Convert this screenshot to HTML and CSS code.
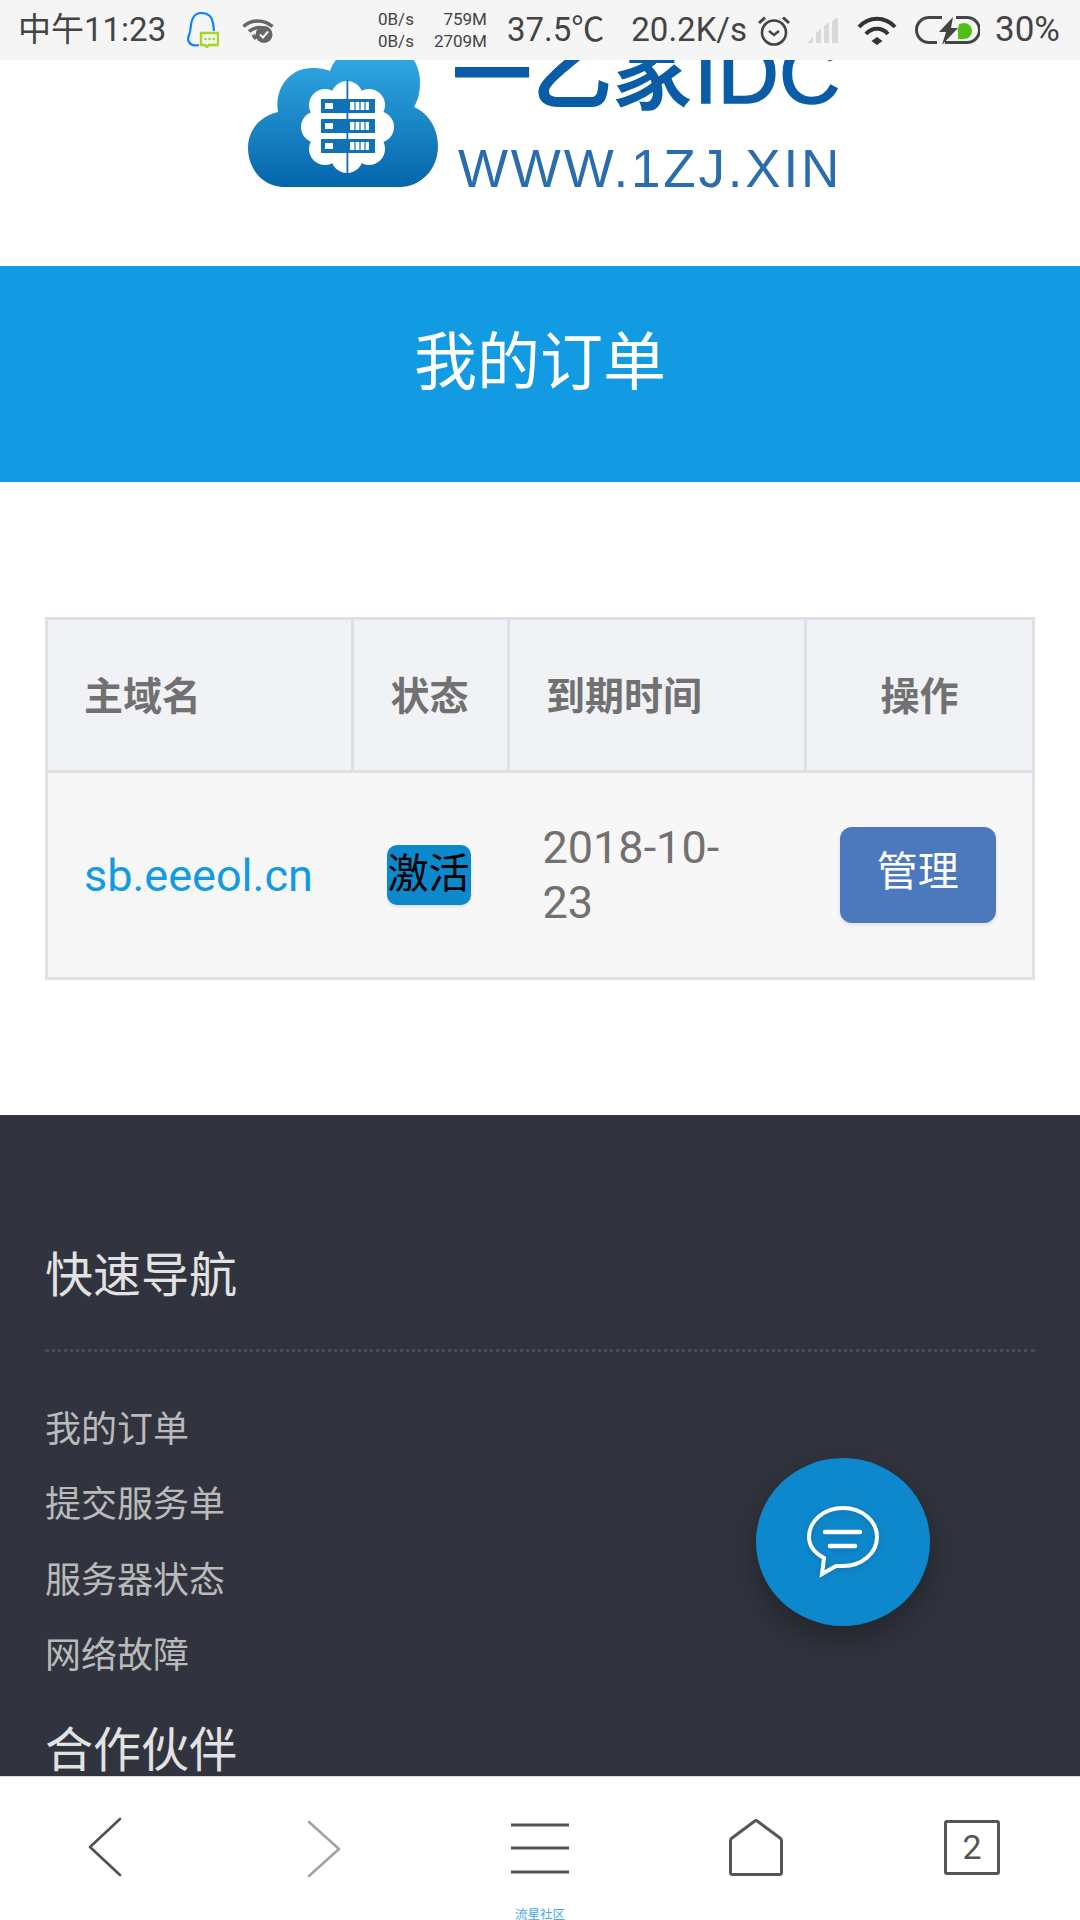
FILE: index.html
```html
<!DOCTYPE html>
<html lang="zh-CN">
<head>
<meta charset="utf-8">
<title>我的订单</title>
<link rel="stylesheet" href="styles.css">
</head>
<body>
<div class="phone">
  <header class="status">
    <div class="status-left">
      <span class="st-text">中午11:23</span>
      <svg class="ic-qq" viewBox="0 0 32 36"><path d="M12 33C7 34 3 33 1.500 29C0 26 2 24 3 20C3.500 16 4 13 4.500 10C6 4 9 1 14 1C20 1 25 4 26 11L27 19" fill="none" stroke="#0a84ff" stroke-width="2.200"/><path d="M14 21H31V33H22L20 35L18 33H14Z" fill="#f5f5f5" stroke="#a5d61c" stroke-width="2.400"/><circle cx="18.500" cy="27" r="1.300" fill="#a5d61c"/><circle cx="22.500" cy="27" r="1.300" fill="#a5d61c"/><circle cx="26.500" cy="27" r="1.300" fill="#a5d61c"/></svg>
      <svg class="ic-wc" viewBox="0 0 32 25"><path d="M1.500 8.500C10 1 22 1 30.500 8.500" fill="none" stroke="#666" stroke-width="3.500"/><path d="M7 13.500C11 10 16 9 21 10" fill="none" stroke="#666" stroke-width="3.500"/><path d="M11 17L14 21" stroke="#666" stroke-width="3.500"/><circle cx="22" cy="16.500" r="8.500" fill="#666"/><path d="M18 16.500L21 19.500L26 13.500" fill="none" stroke="#f5f5f5" stroke-width="2"/></svg>
    </div>
    <div class="status-right">
      <div class="net"><span>0B/s</span><span class="net-r">759M</span><span>0B/s</span><span class="net-r">2709M</span></div>
      <span class="st-text st-temp">37.5℃</span>
      <span class="st-text st-speed">20.2K/s</span>
      <svg class="ic-alarm" viewBox="0 0 32 32"><circle cx="16" cy="18.500" r="12" fill="none" stroke="#444" stroke-width="2.600"/><path d="M11 17L16 21L21 17" fill="none" stroke="#444" stroke-width="2.400"/><path d="M1 9L7 3.500M31 9L25 3.500" stroke="#444" stroke-width="3"/></svg>
      <svg class="ic-signal" viewBox="0 0 31 26"><path d="M0 26L6 20V26ZM9 26V16L14 11V26ZM17 26V9L22 5V26ZM25 26V4L31 0V26Z" fill="#d9d9d9"/></svg>
      <svg class="ic-wifi" viewBox="0 0 40 29"><path d="M2 11C12 0 28 0 38 11" fill="none" stroke="#333" stroke-width="4"/><path d="M9 18C15 11 25 11 31 18" fill="none" stroke="#333" stroke-width="4"/><path d="M20 21L25.500 25L20 29L14.500 25Z" fill="#333"/></svg>
      <svg class="ic-batt" viewBox="0 0 65 28"><path d="M27 1.500H14A12.500 12.500 0 0 0 14 26.500H22" fill="none" stroke="#444" stroke-width="3"/><path d="M41 1.500H52A12.500 12.500 0 0 1 52 26.500H30" fill="none" stroke="#444" stroke-width="3"/><path d="M38 1L24 16H31L27 29L43 12H36Z" fill="#444"/><path d="M44 8L49 7A8 8 0 0 1 49 23H43V13Z" fill="#4fc114"/></svg>
      <span class="st-text st-pct">30%</span>
    </div>
  </header>

  <main class="page">
    <section class="brand">
      <svg class="cloud" viewBox="248 36 190 154">
        <defs><linearGradient id="cg" x1="0" y1="0" x2="0" y2="1"><stop offset="0" stop-color="#36b0ea"/><stop offset="1" stop-color="#0565aa"/></linearGradient></defs>
        <path d="M285 187C262 187 248 168 248 148C248 130 260 116 278 112C274 88 290 68 312 68C320 68 325 69 330 71C335 55 355 40 380 40C405 40 420 62 420 82C420 92 418 100 414 107C428 113 438 128 438 146C438 170 420 187 400 187Z" fill="url(#cg)"/>
        <g fill="#fff"><circle cx="347" cy="127" r="36"/><circle cx="347" cy="97" r="16"/><circle cx="347" cy="157" r="16"/><circle cx="317" cy="127" r="16"/><circle cx="378" cy="127" r="16"/><circle cx="325" cy="105" r="16"/><circle cx="369" cy="105" r="16"/><circle cx="325" cy="149" r="16"/><circle cx="369" cy="149" r="16"/></g>
        <g fill="#1172b8"><rect x="321" y="99" width="54" height="14"/><rect x="321" y="119" width="54" height="14"/><rect x="321" y="139" width="54" height="14"/><rect x="346.500" y="80" width="1.800" height="93"/></g>
        <g fill="#fff"><rect x="325" y="103" width="8" height="6"/><rect x="325" y="123" width="8" height="6"/><rect x="325" y="143" width="8" height="6"/><rect x="350" y="102" width="19" height="8"/><rect x="350" y="122" width="19" height="8"/><rect x="350" y="142" width="19" height="8"/></g>
        <g fill="#6aa7d6"><rect x="354" y="102" width="2" height="8"/><rect x="359" y="102" width="2" height="8"/><rect x="364" y="102" width="2" height="8"/><rect x="354" y="122" width="2" height="8"/><rect x="359" y="122" width="2" height="8"/><rect x="364" y="122" width="2" height="8"/><rect x="354" y="142" width="2" height="8"/><rect x="359" y="142" width="2" height="8"/><rect x="364" y="142" width="2" height="8"/></g>
      </svg>
      <div class="brand-text">
        <div class="brand-name"><span>一乙家</span><span class="brand-idc">IDC</span></div>
        <div class="brand-url">WWW.1ZJ.XIN</div>
      </div>
    </section>

    <section class="banner"><h1>我的订单</h1></section>

    <section class="orders">
      <table class="order-table">
        <colgroup><col class="c1"><col class="c2"><col class="c3"><col class="c4"></colgroup>
        <thead>
          <tr><th>主域名</th><th class="ctr">状态</th><th>到期时间</th><th class="ctr th-op">操作</th></tr>
        </thead>
        <tbody>
          <tr>
            <td><a class="domain" href="#">sb.eeeol.cn</a></td>
            <td class="ctr td-state"><span class="badge">激活</span></td>
            <td class="date"><div class="date-text">2018-10-23</div></td>
            <td class="ctr"><a class="manage" href="#">管理</a></td>
          </tr>
        </tbody>
      </table>
    </section>

    <footer class="foot">
      <h3 class="foot-title ruled">快速导航</h3>
      <ul class="foot-links">
        <li>我的订单</li>
        <li>提交服务单</li>
        <li>服务器状态</li>
        <li>网络故障</li>
      </ul>
      <h3 class="foot-title partners">合作伙伴</h3>
    </footer>
  </main>

  <nav class="toolbar">
    <div class="tool"><svg class="tool-ic" viewBox="0 0 60 60"><path d="M42 2L12 30L42 58" fill="none" stroke="#505050" stroke-width="2.600" stroke-linecap="round" stroke-linejoin="round"/></svg></div>
    <div class="tool"><svg class="tool-ic" viewBox="0 0 60 60"><path d="M15 5L45 32L15 59" fill="none" stroke="#a3a3a3" stroke-width="2.600" stroke-linecap="round" stroke-linejoin="round"/></svg></div>
    <div class="tool"><svg class="tool-ic" viewBox="0 0 60 60"><path d="M1 8H59M1 31H59M1 55H59" fill="none" stroke="#555" stroke-width="3"/></svg><span class="tool-cap">流星社区</span></div>
    <div class="tool"><svg class="tool-ic" viewBox="0 0 60 60"><path d="M28.500 4.200Q30 3 31.500 4.200L54 21Q55.500 22.200 55.500 24V55.500Q55.500 57.500 53.500 57.500H6.500Q4.500 57.500 4.500 55.500V24Q4.500 22.200 6 21Z" fill="none" stroke="#555" stroke-width="3" stroke-linejoin="round"/></svg></div>
    <div class="tool"><span class="tab-count">2</span></div>
  </nav>

  <button class="fab" type="button" aria-label="消息">
    <svg class="fab-ic" viewBox="0 0 173 168"><path d="M68 100C57 94 53 87 53 79C53 63 68 50 87 50C106 50 121 63 121 79C121 95 106 108 87 108H80L66 116Z" fill="none" stroke="#fff" stroke-width="4"/><path d="M69 74H104M74 88H99" stroke="#fff" stroke-width="4.500" stroke-linecap="round"/></svg>
  </button>
</div>
</body>
</html>
```
FILE: styles.css
```css
* { box-sizing: border-box; }
html, body { margin: 0; padding: 0; }
body {
  font-family: Roboto, "Noto Sans CJK SC", sans-serif;
  background: #fff;
}
.phone {
  position: relative;
  width: 1080px;
  height: 1920px;
  display: flex;
  flex-direction: column;
  overflow: hidden;
}

/* status bar */
.status {
  height: 60px;
  flex: none;
  background: #f5f5f5;
  display: flex;
  align-items: center;
  justify-content: space-between;
  padding: 0 20px 0 18px;
  color: #444;
}
.status-left, .status-right { display: flex; align-items: center; }
.status-left { gap: 21px; }
.st-text { font-size: 33px; line-height: 40px; white-space: nowrap; }
.ic-qq { width: 32px; height: 36px; }
.ic-wc { width: 32px; height: 25px; margin-left: 2px; }
.net {
  display: grid;
  grid-template-columns: 35px 74px;
  font-size: 17px;
  line-height: 22px;
}
.net-r { text-align: right; }
.st-temp { margin-left: 20px; }
.st-speed { margin-left: 27px; }
.ic-alarm { width: 32px; height: 32px; margin-left: 11px; }
.ic-signal { width: 31px; height: 26px; margin-left: 17px; }
.ic-wifi { width: 40px; height: 29px; margin-left: 19px; }
.ic-batt { width: 65px; height: 28px; margin-left: 18px; }
.st-pct { margin-left: 15px; font-size: 35px; }

/* scrolling page */
.page { flex: 1; min-height: 0; overflow: hidden; }

.brand {
  height: 206px;
  overflow: hidden;
  display: flex;
  align-items: flex-start;
  gap: 14px;
  padding-left: 248px;
}
.cloud {
  width: 190px;
  height: 154px;
  margin-top: -24px;
  flex: none;
  filter: blur(0.7px);
}
.brand-text { margin-top: -36px; filter: blur(0.4px); white-space: nowrap; }
.brand-name {
  font-size: 80px;
  line-height: 100px;
  color: #0a5ca6;
  font-weight: 700;
  display: flex;
  align-items: baseline;
}
.brand-idc {
  font-family: "Liberation Sans", sans-serif;
  font-size: 85px;
  font-weight: 400;
  margin-left: 2px;
  -webkit-text-stroke: 1.500px #0a5ca6;
}
.brand-url {
  font-family: "Liberation Sans", sans-serif;
  font-size: 53px;
  line-height: 60px;
  letter-spacing: 2.800px;
  color: #2a6dae;
  margin: 13px 0 0 6px;
}

.banner {
  height: 216px;
  background: #129be2;
  display: flex;
  align-items: center;
  justify-content: center;
}
.banner h1 {
  margin: 0 0 23px;
  color: #fff;
  font-size: 63px;
  line-height: 80px;
  font-weight: 400;
}

/* table */
.orders { padding: 135px 45px; }
.order-table {
  width: 987px;
  table-layout: fixed;
  border-collapse: collapse;
  border: 3px solid #dfe0e6;
  font-size: 45px;
  color: #717171;
}
.c1 { width: 306px; }
.c2 { width: 156px; }
.c3 { width: 297px; }
.c4 { width: 228px; }
.order-table th, .order-table td {
  border: 3px solid #dfe0e6;
  padding: 0 0 0 36px;
  text-align: left;
}
.order-table th {
  height: 153px;
  padding-bottom: 4px;
  background: #f1f2f6;
  font-weight: 700;
  font-size: 39px;
}
.order-table td {
  height: 207px;
  background: #f7f7f8;
  border-left-width: 0;
  border-right-width: 0;
}
.order-table .ctr { padding: 0 2px 0 0; text-align: center; }
.order-table th.ctr { padding-bottom: 4px; }
.order-table th.th-op { padding-right: 0; }
.order-table .td-state { padding-right: 4px; }
.order-table .date { padding-left: 34px; padding-right: 49px; }
.date-text { line-height: 55px; }
.domain { color: #129be2; text-decoration: none; }
.badge {
  display: inline-block;
  width: 84px;
  height: 60px;
  line-height: 58px;
  border-radius: 10px;
  background: #0e88cc;
  color: #000;
  font-size: 41px;
  box-shadow: 0 2px 3px rgba(0,0,0,.1);
  vertical-align: middle;
}
.manage {
  display: inline-block;
  width: 156px;
  height: 96px;
  line-height: 90px;
  border-radius: 12px;
  background: #4c78bd;
  color: #fff;
  font-size: 41px;
  text-decoration: none;
  box-shadow: 0 2px 4px rgba(0,0,0,.1);
  vertical-align: middle;
}

/* footer */
.foot {
  height: 661px;
  background: #31343e;
  padding: 129px 45px 0;
  overflow: hidden;
}
.foot-title {
  margin: 0;
  font-size: 48px;
  line-height: 64px;
  font-weight: 400;
  color: #e2e2e2;
}
.ruled { padding-bottom: 41px; border-bottom: 3px dotted #4b4c50; }
.foot-links {
  list-style: none;
  margin: 41px 0 0;
  padding: 0;
  font-size: 36px;
  line-height: 75.400px;
  color: #bababa;
}
.partners { margin-top: 24px; }

/* bottom toolbar */
.toolbar {
  height: 144px;
  flex: none;
  border-top: 1px solid #dcdcdc;
  background: #fff;
  display: grid;
  grid-template-columns: repeat(5, 216px);
  padding-top: 40px;
  overflow: hidden;
}
.tool { display: flex; flex-direction: column; align-items: center; }
.tool-ic { width: 60px; height: 60px; flex: none; }
.tool-cap {
  margin-top: 31px;
  font-size: 12.500px;
  line-height: 13px;
  color: #45a8f5;
  white-space: nowrap;
}
.tab-count {
  width: 56px;
  height: 55px;
  margin-top: 3px;
  border: 3px solid #555;
  border-radius: 3px;
  color: #555;
  font-size: 34px;
  line-height: 49px;
  text-align: center;
}

/* floating action button */
.fab {
  position: absolute;
  left: 756px;
  top: 1458px;
  width: 174px;
  height: 168px;
  padding: 0;
  border: 0;
  border-radius: 50%;
  background: #0e88cc;
  box-shadow: 0 12px 34px rgba(0,0,0,.32);
}
.fab-ic { display: block; width: 173px; height: 168px; filter: drop-shadow(0 2px 3px rgba(0,0,0,.15)); }
```
